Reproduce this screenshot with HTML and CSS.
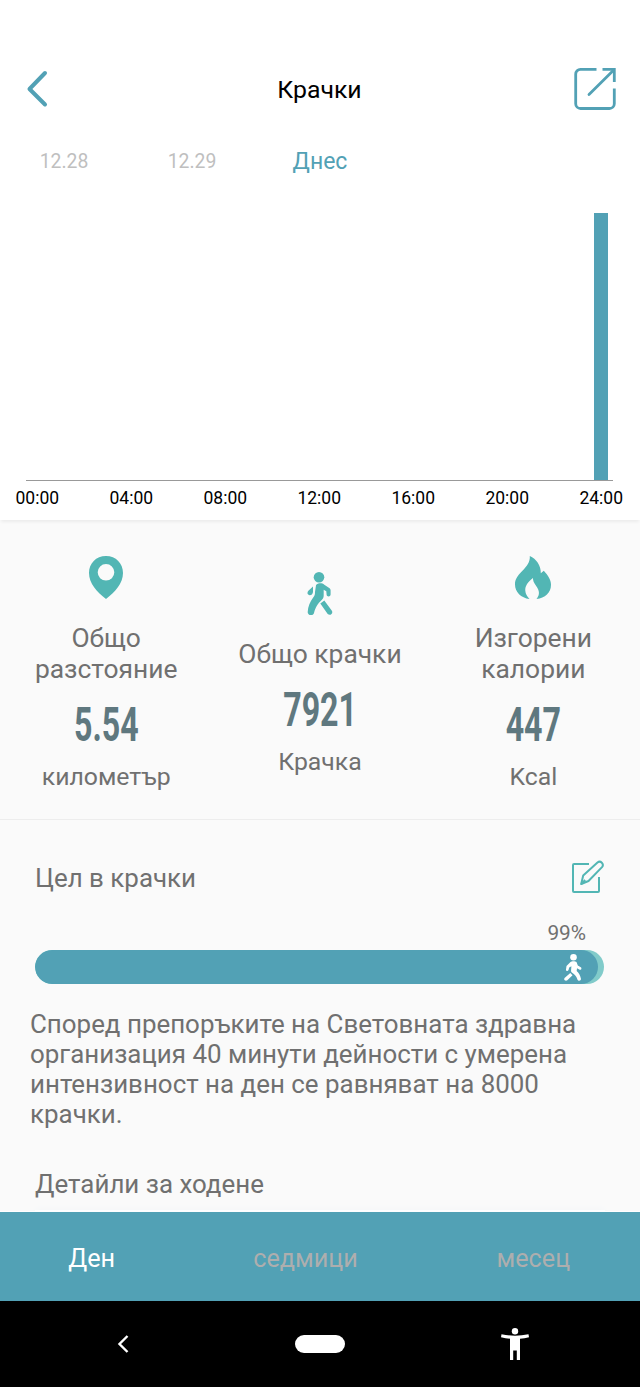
FILE: index.html
```html
<!DOCTYPE html>
<html lang="bg">
<head>
    <meta charset="UTF-8">
    <title>Крачки</title>
    <link rel="stylesheet" href="styles.css">
</head>
<body>

<div class="screen">

    <!-- header -->
    <div class="header">
        <svg class="back" width="24" height="40" viewBox="0 0 24 40">
            <path d="M20 4L4.500 20 20 35.500" fill="none" stroke="#52a1b5" stroke-width="4" stroke-linecap="round" stroke-linejoin="round"/>
        </svg>
        <h1 class="title">Крачки</h1>
        <svg class="share" width="44" height="44" viewBox="0 0 44 44">
            <g fill="none" stroke="#52a1b5" stroke-width="2.800">
                <path d="M23.500 2.400H7.500a4.800 4.800 0 0 0-4.800 4.800v29.500a4.800 4.800 0 0 0 4.800 4.800h29a4.800 4.800 0 0 0 4.800-4.800V21.500"/>
                <path d="M29.500 2.400h11.800V15"/>
                <path d="M40 3.800L16 27.500" stroke-linecap="round"/>
            </g>
        </svg>
    </div>

    <!-- dates -->
    <div class="dates">
        <span>12.28</span>
        <span>12.29</span>
        <span class="today">Днес</span>
    </div>

    <!-- chart -->
    <div class="chart">
        <div class="plot">
            <div class="bar" style="height: 100%"></div>
        </div>
        <div class="hours">
            <span>00:00</span>
            <span>04:00</span>
            <span>08:00</span>
            <span>12:00</span>
            <span>16:00</span>
            <span>20:00</span>
            <span>24:00</span>
        </div>
    </div>

    <!-- totals -->
    <div class="stats">
        <div class="stat">
            <svg width="36" height="43" viewBox="0 0 36 43">
                <path fill="#52b6b4" fill-rule="evenodd" d="M18 0C8 0 1 7.500 1 17c0 10.500 8 19 17 26 9-7 17-15.500 17-26C35 7.500 28 0 18 0zm0 8a8.300 8.300 0 1 1 0 16.600A8.300 8.300 0 0 1 18 8z"/>
            </svg>
            <p class="label">Общо разстояние</p>
            <p class="value">5.54</p>
            <p class="unit">километър</p>
        </div>
        <div class="stat">
            <svg width="26" height="43" viewBox="0 0 26 43">
                <g fill="#52b6b4">
                    <circle cx="12" cy="5.300" r="5.300"/>
                    <path d="M9 13.200c1.500-2.200 6-2.600 8.300-.5l5.300 3.600c.7.500 1 1.200 1 2v4.200c0 2.400-3.700 2.600-4 .2l-.3-3.500-2.600-1.500v5.800c0 2-.6 3-2 4.400-4.200 4-6 6.800-7.700 13-1 3.500-6.500 3-6.300-1 .2-5.600 2.400-10.500 5.500-14.500 1.500-2 1.800-3 1.800-5.500z"/>
                    <path d="M6 14.500v5.400c-.3 3-3.300 4.300-5 2.400-1-1.200-.4-2.600.4-3.500zM13.300 31.500l4-3 7.400 10c2 2.800-1.500 5.800-4 3.500z"/>
                </g>
            </svg>
            <p class="label">Общо крачки</p>
            <p class="value">7921</p>
            <p class="unit">Крачка</p>
        </div>
        <div class="stat">
            <svg width="36" height="43" viewBox="0 0 36 43">
                <path fill="#52b6b4" d="M14.800 0c6.500 3 11.300 9.500 11 17.300l3-2.500c4 4.500 7.200 8.700 7.200 14 0 8-6 13.500-14.500 14.200 2.300-3 3.300-6 1.600-9.800-1.800-4-5-6-5.200-11.200-5 3.800-8 8-7.600 12.800.2 3.200 1.700 5.700 4.200 8.200C6 42 0 36 0 28.500 0 16.500 15.800 12.500 14.800 0z"/>
            </svg>
            <p class="label">Изгорени калории</p>
            <p class="value">447</p>
            <p class="unit">Kcal</p>
        </div>
    </div>

    <!-- goal -->
    <div class="goal">
        <div class="goal-head">
            <span>Цел в крачки</span>
            <svg width="34" height="34" viewBox="0 0 34 34">
                <g fill="none" stroke="#52b6b4" stroke-width="2" stroke-linejoin="round">
                    <path d="M18 4H3a1 1 0 0 0-1 1v26a1 1 0 0 0 1 1h24a1 1 0 0 0 1-1V17"/>
                    <path d="M10.200 24l2-8.500L26.500 2.500c3-2.500 7 1.500 4.500 4.600L17.500 21z"/>
                    <path d="M10.200 24l4-4"/>
                </g>
            </svg>
        </div>
        <div class="percent">99%</div>
        <div class="track">
            <div class="fill" style="width: 99%">
                <svg width="18" height="27" viewBox="0 0 18 27">
                    <g fill="#fff">
                        <circle cx="9.500" cy="3.300" r="3.300"/>
                        <path d="M6.500 8c1-1 4.800-1 6 0l1.300 3.500 3 1.800c1.400 1 .2 3-1.500 2.200L13 14.300l-.3 2.600c2.600 2.500 3.300 4.300 4.200 7.600.6 2.500-2.600 3.200-3.500 1-.8-2.500-1.600-4-3.600-5.500l-2-1.500c-.8-.8-.8-1.400-.7-2.500l.3-3.800-2.200 1.300-.7 2.600c-.5 1.600-2.700 1.200-2.500-.5l.5-3.600z"/>
                        <path d="M6.300 19l2.200 2.300-5.200 5c-1.800 1.500-4.300-.8-2.500-2.500z"/>
                    </g>
                </svg>
            </div>
        </div>
    </div>

    <p class="advice">Според препоръките на Световната здравна организация 40 минути дейности с умерена интензивност на ден се равняват на 8000 крачки.</p>

    <div class="details">Детайли за ходене</div>
    <div class="details-card"></div>

    <!-- tabs -->
    <div class="tabs">
        <span class="active">Ден</span>
        <span class="week">седмици</span>
        <span>месец</span>
    </div>

    <!-- system navigation -->
    <div class="navbar">
        <svg width="12" height="20" viewBox="0 0 12 20">
            <path d="M10.500 2L2.500 10l8 8" fill="none" stroke="#fff" stroke-width="2.400"/>
        </svg>
        <div class="home"></div>
        <svg width="28" height="32" viewBox="0 0 28 32">
            <g fill="#fff">
                <circle cx="14" cy="3.200" r="3.200"/>
                <path d="M.5 6.300c9 1.800 18 1.800 27 0l.5 2.900c-3 .7-6 1.200-9 1.500V32h-3.200v-9.500h-3.600V32H9V10.700c-3-.3-6-.8-9-1.500z"/>
            </g>
        </svg>
    </div>

</div>

</body>
</html>
```
FILE: styles.css
```css
* {
    margin: 0;
    padding: 0;
    box-sizing: border-box;
}

body {
    font-family: Roboto, "Noto Sans", sans-serif;
    background-color: #fafafa;
}

svg {
    display: block;
}

.screen {
    width: 640px;
    height: 1387px;
    overflow: hidden;
    display: flex;
    flex-direction: column;
    color: #707070;
    font-size: 25.92px;
}

/* header */
.header {
    flex: none;
    height: 136px;
    padding: 41px 23px 0 25px;
    display: grid;
    grid-template-columns: 44px 1fr 44px;
    align-items: center;
    background-color: #fff;
}

.title {
    padding: 2px 3px 0 0;
    font-size: 24.8px;
    font-weight: 400;
    color: #000;
    text-align: center;
}

/* dates */
.dates {
    flex: none;
    height: 50px;
    display: grid;
    grid-template-columns: repeat(5, 128px);
    align-items: center;
    text-align: center;
    font-size: 19.4px;
    color: #bfbfbf;
    background-color: #fff;
}

.dates .today {
    font-size: 23px;
    color: #52a1b5;
}

/* chart */
.chart {
    flex: none;
    height: 334px;
    padding-top: 27px;
    background-color: #fff;
    box-shadow: 0 3px 3px -1px rgba(0, 0, 0, .06);
}

.plot {
    height: 268px;
    margin: 0 27px 0 26px;
    padding-right: 5px;
    display: flex;
    justify-content: flex-end;
    align-items: flex-end;
    border-bottom: 1px solid #999;
}

.bar {
    width: 14px;
    background-color: #52a1b5;
}

.hours {
    display: flex;
    justify-content: space-between;
    padding: 6px 17px 0 15.5px;
    font-size: 17.5px;
    line-height: 22px;
    color: #000;
}

/* totals */
.stats {
    flex: none;
    height: 300px;
    display: grid;
    grid-template-columns: repeat(3, 1fr);
    align-items: center;
    border-bottom: 1px solid #ededed;
}

.stat {
    display: flex;
    flex-direction: column;
    align-items: center;
    padding: 9px 20px 0;
    text-align: center;
}

.stat:first-child {
    padding-right: 21px;
}

.label {
    margin-top: 24px;
    font-size: 26.400px;
    line-height: 31px;
}

.value {
    margin-top: 12px;
    font-size: 48px;
    line-height: 56px;
    font-weight: 700;
    color: #5f787f;
    transform: scaleX(.67);
}

.unit {
    margin-top: 8px;
    font-size: 24.8px;
    line-height: 31px;
}

/* goal */
.goal {
    flex: none;
    height: 165px;
    padding: 40px 35px 0 35px;
}

.goal-head {
    display: flex;
    justify-content: space-between;
    align-items: center;
    height: 36px;
}

.goal-head svg {
    margin-top: -2px;
}

.percent {
    margin-top: 24px;
    padding-right: 19px;
    text-align: right;
    font-size: 20.8px;
    line-height: 26px;
}

.track {
    height: 34px;
    margin: 4px 1px 0 0;
    border-radius: 17px;
    background-color: #81cbca;
    overflow: hidden;
}

.fill {
    height: 34px;
    padding-right: 16px;
    display: flex;
    justify-content: flex-end;
    align-items: center;
    border-radius: 17px;
    background-color: #52a1b5;
}

.advice {
    flex: none;
    padding: 24px 30px 0;
    line-height: 30px;
}

.details {
    flex: none;
    padding: 40px 35px 0;
    line-height: 30px;
}

.details-card {
    flex: none;
    height: 1px;
    margin: 11px 35px 0;
    background-color: #fff;
    box-shadow: 0 0 6px #e4edf4;
}

/* tabs */
.tabs {
    flex: none;
    height: 90px;
    margin-top: auto;
    padding-top: 3px;
    display: grid;
    grid-template-columns: repeat(3, 1fr);
    align-items: center;
    text-align: center;
    font-size: 25.2px;
    color: #aeaeae;
    background-color: #52a1b5;
    border-top: 1px solid #fff;
    z-index: 1;
}

.tabs .active {
    padding-right: 30px;
    color: #fff;
}

.tabs .week {
    padding-right: 29px;
}

/* system navigation */
.navbar {
    flex: none;
    height: 86px;
    padding: 0 111px 0 117px;
    display: grid;
    grid-template-columns: 12px 1fr 28px;
    justify-items: center;
    align-items: center;
    background-color: #000;
}

.home {
    width: 50px;
    height: 18px;
    margin-right: -9px;
    border-radius: 9px;
    background-color: #fff;
}
```
